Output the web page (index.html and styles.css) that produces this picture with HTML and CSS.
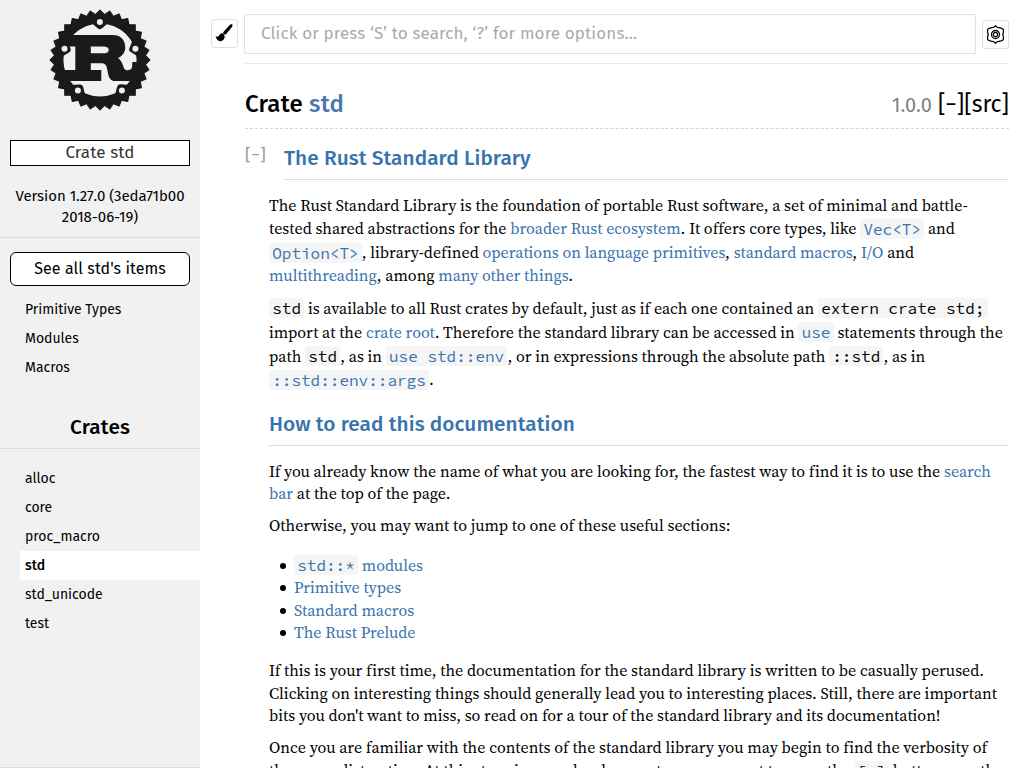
FILE: index.html
```html
<!DOCTYPE html>
<html lang="en">
<head>
<meta charset="utf-8">
<title>std - Rust</title>
<link rel="stylesheet" href="styles.css">
</head>
<body>
<nav class="sidebar">
  <a class="logo" href="#">
    <svg width="100" height="100" viewBox="0 0 100 100">
      <g fill="#1a1a1a" stroke="#1a1a1a" stroke-width="1.2" stroke-linejoin="round">
        <path id="sq" d="M50 .2 99.8 50 50 99.800 .2 50Z"/>
        <use href="#sq" transform="rotate(11.25 50 50)"/>
        <use href="#sq" transform="rotate(22.5 50 50)"/>
        <use href="#sq" transform="rotate(33.75 50 50)"/>
        <use href="#sq" transform="rotate(45 50 50)"/>
        <use href="#sq" transform="rotate(56.25 50 50)"/>
        <use href="#sq" transform="rotate(67.5 50 50)"/>
        <use href="#sq" transform="rotate(78.75 50 50)"/>
      </g>
      <circle cx="50" cy="50" r="36.6" fill="#f1f1f1"/>
      <g fill="#1a1a1a">
        <path id="lug" d="M41 12.5 47.6 18.2Q49.8 20.2 52 18.2L59 12.5Z"/>
        <use href="#lug" transform="rotate(72 50 50)"/>
        <use href="#lug" transform="rotate(144 50 50)"/>
        <use href="#lug" transform="rotate(216 50 50)"/>
        <use href="#lug" transform="rotate(288 50 50)"/>
        <path fill-rule="evenodd" d="M20 25H63C70 25 75.3 29.5 75.3 37.5C75.3 42 72.500 46 68 48C72.500 51 73 56.500 74.500 59C76 60.700 80 60.700 81.500 58.500C82.300 57 82.300 54 82.300 52H89L85 66C83 70 81 71 79.500 71H65C57 71 58.500 60 56 55.500C55 53.700 53.500 53.200 51 53.200H40.800V60H51.300V71H17L11 60H25.300V36.600H14ZM40.800 36.600V43.300H53.500C56 43.300 58.700 42.500 58.700 40C58.700 37.500 56 36.600 53.500 36.600Z"/>
      </g>
      <g fill="#f1f1f1">
        <circle cx="49.9" cy="12" r="3"/>
        <circle cx="14.500" cy="38.700" r="3"/>
        <circle cx="85.400" cy="38.700" r="3"/>
        <circle cx="27.900" cy="80.500" r="3"/>
        <circle cx="71.900" cy="80.500" r="3"/>
      </g>
    </svg>
  </a>
  <p class="location">Crate std</p>
  <div class="version"><p>Version 1.27.0 (3eda71b00 2018-06-19)</p></div>
  <a class="all-items" href="#">See all std's items</a>
  <ul class="items">
    <li><a href="#">Primitive Types</a></li>
    <li><a href="#">Modules</a></li>
    <li><a href="#">Macros</a></li>
  </ul>
  <h3 class="crates-title">Crates</h3>
  <ul class="items crates">
    <li><a href="#">alloc</a></li>
    <li><a href="#">core</a></li>
    <li><a href="#">proc_macro</a></li>
    <li><a class="current" href="#">std</a></li>
    <li><a href="#">std_unicode</a></li>
    <li><a href="#">test</a></li>
  </ul>
</nav>
<main class="page">
  <form class="toolbar">
    <button class="tool theme" type="button" aria-label="Pick another theme">
      <svg width="18" height="18" viewBox="0 0 18 18"><path d="M17.300.6C16.500-.1 15.300.4 14.500 1.200L8.600 7.700C8 8.400 8 9 8.600 9.600L9.300 10.200C10 10.700 10.600 10.600 11.200 10L16.700 3.300C17.400 2.400 17.900 1.200 17.300.6ZM7.500 9.200C5.900 9 4.700 10 4.300 11.300C3.900 12.600 2.600 12.900.5 12.500C1.200 14.500 2.600 17 5.300 17.200C8 17.300 9.900 15 9.600 12.600C9.500 11 8.900 9.900 7.500 9.200Z"/></svg>
    </button>
    <input class="search" type="search" placeholder="Click or press ‘S’ to search, ‘?’ for more options…">
    <a class="tool settings" href="#" aria-label="Settings">
      <svg width="17" height="19" viewBox=".5 .5 17 19" fill="none" stroke="#000" stroke-linejoin="round"><path stroke-width="1.200" d="M9 1.200 10.800 2.900 12.500 3.200 14.600 3.600 16.900 4.700V8L16.200 10 16.900 12V15.300L14.600 16.400 12.500 16.800 10.800 17.100 9 18.800 7.200 17.100 5.500 16.800 3.400 16.400 1.100 15.300V12L1.800 10 1.100 8V4.700L3.400 3.600 5.500 3.200 7.200 2.900Z"/><circle cx="9" cy="10" r="4" stroke-width="1.300"/><circle cx="9" cy="10" r="2.100" stroke-width="1.200"/></svg>
    </a>
  </form>
  <section class="content">
    <h1 class="fqn">
      <span class="in-band">Crate <a class="mod" href="#">std</a></span>
      <span class="out-of-band"><span class="since">1.0.0</span> <a href="#">[−]</a><a href="#">[src]</a></span>
    </h1>
    <div class="doc-head">
      <a class="toggle" href="#">[<span>−</span>]</a>
      <h2 class="section-title"><a href="#">The Rust Standard Library</a></h2>
    </div>
    <div class="docblock">
      <p>The Rust Standard Library is the foundation of portable Rust software, a set of minimal and battle-tested shared abstractions for the <a href="#">broader Rust ecosystem</a>. It offers core types, like <a href="#"><code>Vec&lt;T&gt;</code></a> and <a href="#"><code>Option&lt;T&gt;</code></a>, library-defined <a href="#">operations on language primitives</a>, <a href="#">standard macros</a>, <a href="#">I/O</a> and <a href="#">multithreading</a>, among <a href="#">many other things</a>.</p>
      <p><code>std</code> is available to all Rust crates by default, just as if each one contained an <code>extern crate std;</code> import at the <a href="#">crate root</a>. Therefore the standard library can be accessed in <a href="#"><code>use</code></a> statements through the path <code>std</code>, as in <a href="#"><code>use std::env</code></a>, or in expressions through the absolute path <code>::std</code>, as in <a href="#"><code>::std::env::args</code></a>.</p>
      <h2 class="section-title"><a href="#">How to read this documentation</a></h2>
      <p>If you already know the name of what you are looking for, the fastest way to find it is to use the <a href="#">search bar</a> at the top of the page.</p>
      <p>Otherwise, you may want to jump to one of these useful sections:</p>
      <ul>
        <li><a href="#"><code>std::*</code> modules</a></li>
        <li><a href="#">Primitive types</a></li>
        <li><a href="#">Standard macros</a></li>
        <li><a href="#">The Rust Prelude</a></li>
      </ul>
      <p>If this is your first time, the documentation for the standard library is written to be casually perused. Clicking on interesting things should generally lead you to interesting places. Still, there are important bits you don't want to miss, so read on for a tour of the standard library and its documentation!</p>
      <p>Once you are familiar with the contents of the standard library you may begin to find the verbosity of the prose distracting. At this stage in your development you may want to press the <code>[-]</code> button near the top of the page to collapse it into a more skimmable view.</p>
    </div>
  </section>
</main>
</body>
</html>
```
FILE: styles.css
```css
* { box-sizing: border-box; }

body {
  display: flex;
  height: 768px;
  margin: 0;
  overflow: hidden;
  background: #fff;
  color: #000;
  font: 16px/1.4 "Source Serif Pro", "Source Serif 4", "Noto Serif", serif;
}

a { color: #000; text-decoration: none; }

/* Sidebar */
.sidebar {
  flex: 0 0 200px;
  height: 768px;
  overflow: hidden;
  border-bottom: 1px solid #ddd;
  background: #f1f1f1;
  font-family: "Fira Sans", "Noto Sans", sans-serif;
}
.logo { display: block; height: 100px; margin: 10px 50px 30px; }
.logo svg { display: block; overflow: visible; }
.location {
  height: 26px;
  margin: 0 10px 20px;
  border: 1px solid #000;
  background: #fff;
  color: #333;
  font-size: 17px;
  letter-spacing: .12px;
  line-height: 24px;
  text-align: center;
}
.version {
  height: 52px;
  margin-bottom: 14px;
  border-bottom: 1px solid #ddd;
  font-size: 15px;
  letter-spacing: -.04px;
  line-height: 21px;
  text-align: center;
}
.version p { margin: 0 10px; }
.all-items {
  display: block;
  height: 34px;
  margin: 0 10px 9px;
  border: 1px solid #000;
  border-radius: 6px;
  background: #fff;
  font-size: 16px;
  letter-spacing: .08px;
  line-height: 32px;
  text-align: center;
}
.items { margin: 0; padding: 0 0 0 20px; list-style: none; }
.items a {
  display: block;
  height: 29px;
  padding-left: 5px;
  font-size: 14px;
  line-height: 29px;
}
.items .current { background: #fff; font-weight: 500; }
.crates-title {
  height: 37px;
  margin: 30px 0 15px;
  border-bottom: 1px solid #ddd;
  font-size: 20.8px;
  font-weight: 500;
  letter-spacing: .15px;
  line-height: 31px;
  text-align: center;
}

/* Toolbar */
.page { flex: 1; min-width: 0; height: 768px; overflow: hidden; padding: 14px 15px 0 11px; }
.toolbar { display: flex; }
.tool {
  display: flex;
  flex: none;
  align-items: center;
  justify-content: center;
  width: 27px;
  height: 29px;
  padding: 0;
  border: 1px solid #e0e0e0;
  border-radius: 3px;
  background: #fff;
}
.theme { margin: 5px 6px 0 0; padding: 0 1px 1px 0; }
.settings { margin: 6px 0 0 6px; }
.search {
  flex: 1;
  min-width: 0;
  height: 40px;
  padding: 0 16px 2px;
  border: 1px solid #e0e0e0;
  border-radius: 2px;
  outline: none;
  background: #fff;
  font: 17px "Fira Sans", "Noto Sans", sans-serif;
  letter-spacing: .12px;
}
.search::placeholder { color: #a9a9a9; }

/* Content */
.content {
  margin: 9px 0 0 34px;
  border-top: 1px solid #eaeaea;
}
.fqn {
  display: flex;
  align-items: baseline;
  justify-content: space-between;
  height: 43px;
  margin: 22px 0 0;
  border-bottom: 1px dashed #d5d5d5;
  font: 500 24px/36px "Fira Sans", "Noto Sans", sans-serif;
}
.in-band { letter-spacing: .2px; }
.mod { color: #4d76ae; }
.out-of-band { font-size: 23px; font-weight: 400; }
.since { color: #808080; font-size: 20px; }
.doc-head { display: flex; }
.toggle {
  flex: 0 0 39px;
  padding-top: 14px;
  color: #999;
  font: 17px/24px "Fira Sans", "Noto Sans", sans-serif;
}
.toggle span { margin: 0 .7px; }
.doc-head .section-title { flex: 1; margin: 14px 0 0; }
.section-title {
  height: 37px;
  margin: 18.2px 0 13.6px;
  border-bottom: 1px solid #ddd;
  font: 500 20.8px/31px "Fira Sans", "Noto Sans", sans-serif;
  letter-spacing: .05px;
}
.section-title a, .docblock a { color: #3873ad; }
.docblock { margin: 14px 0 0 24px; letter-spacing: .002px; }
.docblock p { margin: 0 0 9.6px; }
.docblock ul { margin: 16px 0 15.6px; padding-left: 25px; list-style: none; }
.docblock li::before {
  display: inline-block;
  width: 6px;
  height: 6px;
  margin: 0 8px 0 -14px;
  border-radius: 50%;
  background: #000;
  content: "";
  vertical-align: 2px;
}
.docblock code {
  padding: 0 .2em;
  border-radius: 3px;
  background: #f5f5f5;
  font-family: "Source Code Pro", "Noto Sans Mono", monospace;
  font-size: 16px;
  line-height: 20px;
  white-space: nowrap;
}
/* Gives lines that hold code a little extra room above */
.docblock code::before {
  display: inline-block;
  height: 18.4px;
  content: "";
}
```
